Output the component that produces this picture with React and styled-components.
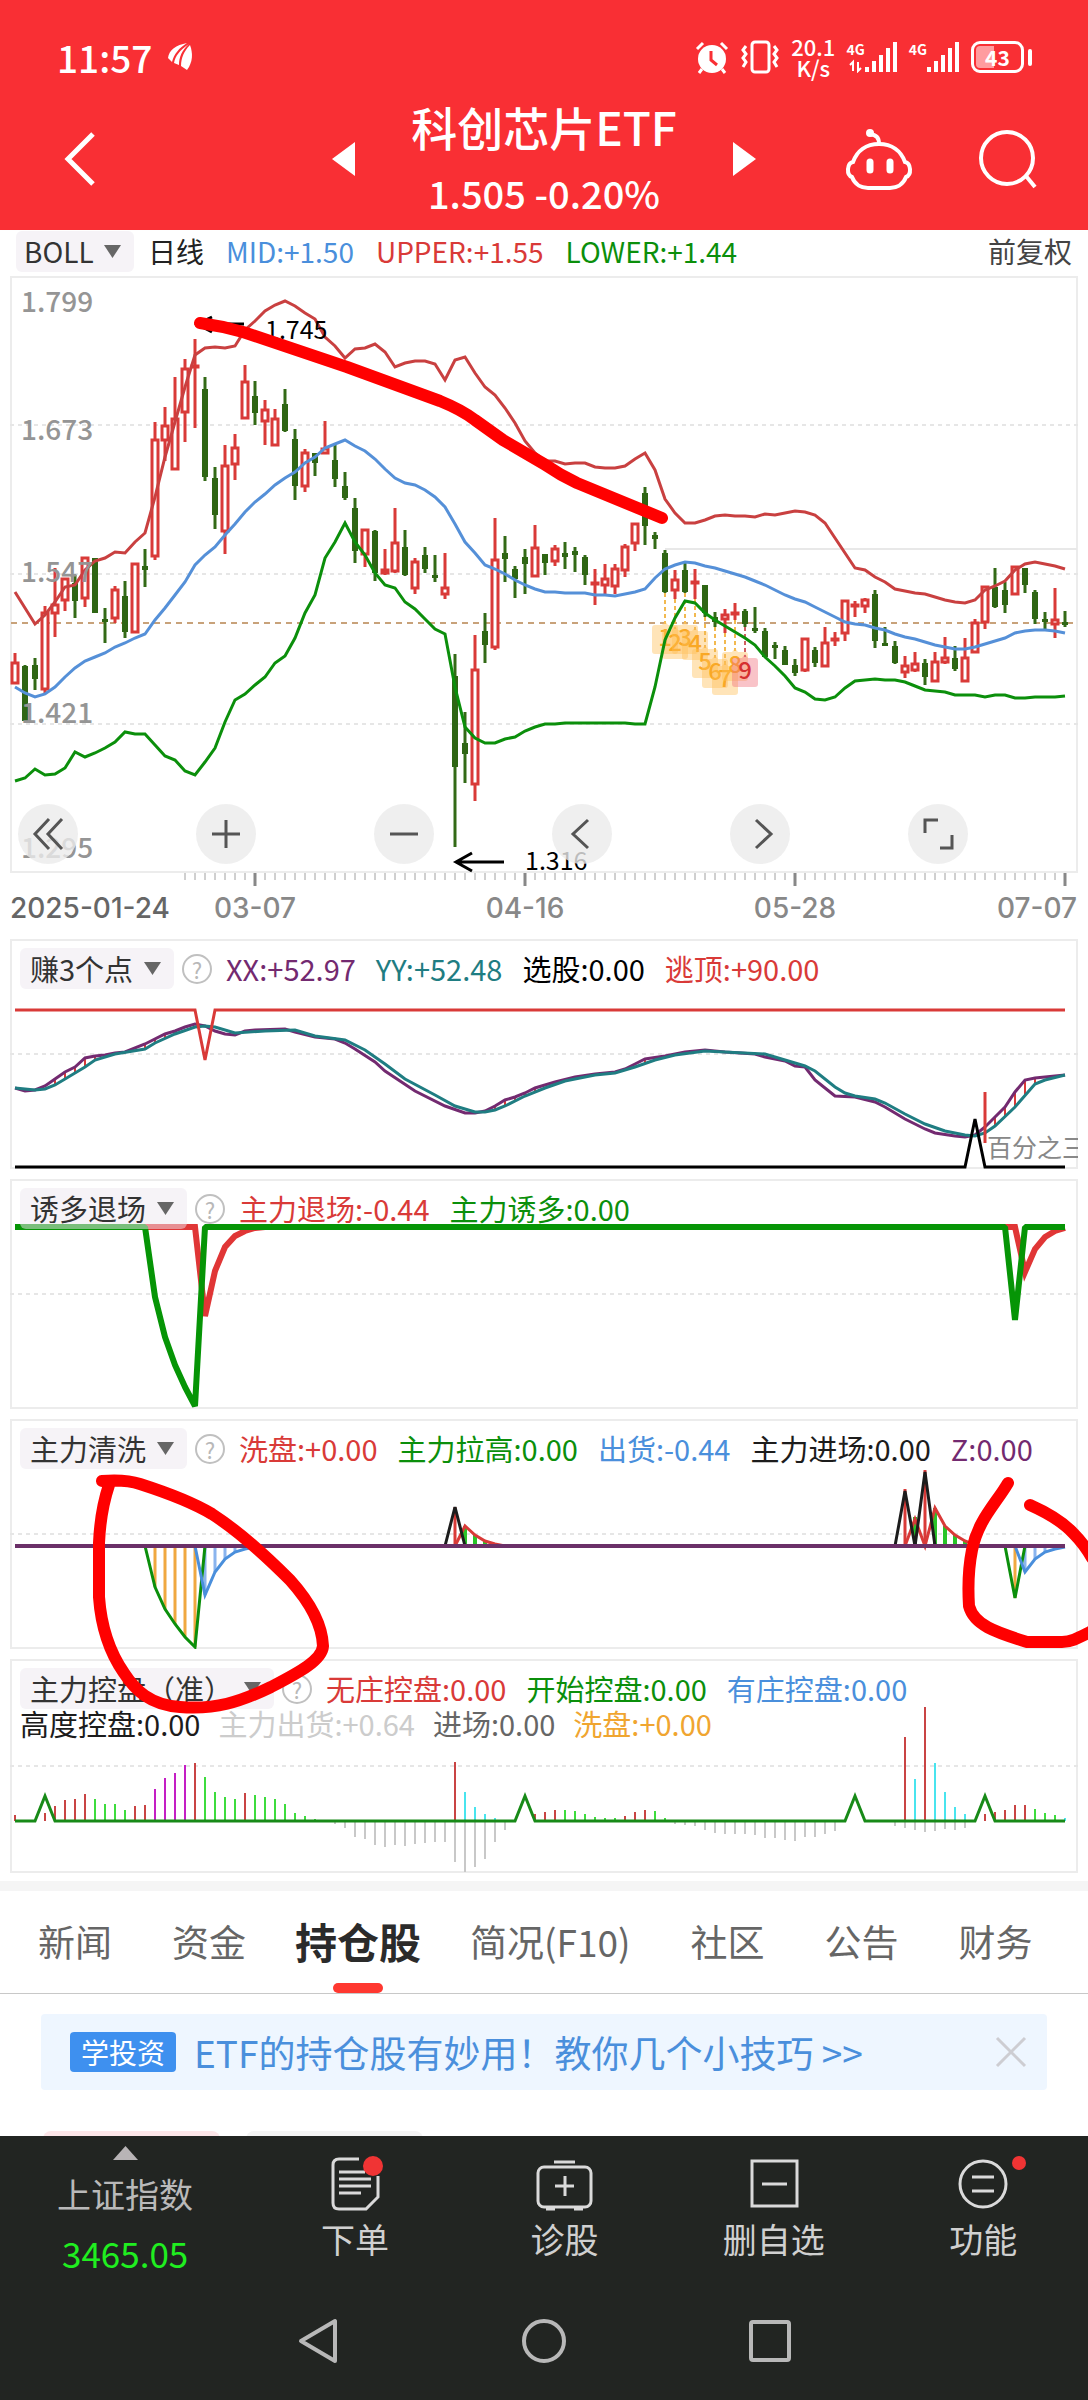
import React from "react";
import styled, { createGlobalStyle } from "styled-components";

const RED = "#d93a38";
const GREEN = "#0b8f0b";
const BLUE = "#4a8fdc";
const PURPLE = "#732a70";
const TEAL = "#1f7d82";
const INK = "#1c1c1c";

const Global = createGlobalStyle`
  *, *::before, *::after { box-sizing: border-box; }
  body { margin: 0; background: #fff; font-family: "Noto Sans CJK SC", "Noto Sans", sans-serif; color: #333; }
  button, select { font: inherit; color: inherit; background: none; border: 0; margin: 0; padding: 0; }
  svg { display: block; }
`;

const Page = styled.div`
  display: flex;
  flex-direction: column;
  overflow: hidden;
`;

/* ---------- header ---------- */

const Header = styled.header`
  background: #f92f34;
  color: #fff;
  height: 230px;
  padding-top: 27px;
`;

const StatusBar = styled.div`
  display: flex;
  align-items: center;
  height: 60px;
  padding: 0 56px 0 57px;
`;

const Clock = styled.span`
  font-size: 37px;
  font-weight: 500;
  line-height: 60px;
  margin-right: 16px;
`;

const StatusIcons = styled.div`
  display: flex;
  align-items: center;
  gap: 11px;
  margin-left: auto;
`;

const NetSpeed = styled.div`
  display: grid;
  grid-auto-rows: 21px;
  font-size: 22px;
  font-weight: 500;
  line-height: 21px;
  text-align: center;
`;

const Signal = styled.div`
  display: flex;
  align-items: flex-start;
  height: 32px;
  font-size: 14px;
  font-weight: 700;
  line-height: 16px;
`;

const Battery = styled.div`
  display: flex;
  align-items: center;
  gap: 4px;
  &::after {
    content: "";
    width: 4px;
    height: 17px;
    border-radius: 2px;
    background: #fff;
  }
`;

const BatteryCell = styled.span`
  width: 53px;
  height: 32px;
  border: 3px solid #fff;
  border-radius: 9px;
  background: linear-gradient(90deg, #ff9c9f 43%, transparent 43%) content-box;
  padding: 2px;
  font-size: 21px;
  font-weight: 700;
  line-height: 22px;
  text-align: center;
`;

const TitleBar = styled.div`
  display: grid;
  grid-template-columns: 1fr auto 1fr;
  align-items: center;
  height: 144px;
  padding: 0 50px;
`;

const IconButton = styled.button`
  display: flex;
  justify-content: center;
  align-items: center;
  cursor: pointer;
`;

const TitleGroup = styled.div`
  display: flex;
  align-items: center;
  gap: 56px;
`;

const TitleText = styled.div`
  text-align: center;
  h1 {
    margin: 0;
    font-size: 46px;
    font-weight: 500;
    line-height: 64px;
  }
  p {
    margin: 4px 0 0;
    font-size: 38px;
    font-weight: 500;
    line-height: 62px;
  }
`;

const Actions = styled.div`
  display: flex;
  justify-content: flex-end;
  gap: 64px;
`;

/* ---------- charts ---------- */

const Charts = styled.main`
  position: relative;
  padding: 0 10px 8px;
`;

const Legend = styled.div`
  display: flex;
  flex-wrap: wrap;
  align-items: center;
  column-gap: ${(p) => p.$gap || 20}px;
  font-size: ${(p) => p.$size || 29}px;
  line-height: 41px;
  white-space: nowrap;
`;

const TopLegend = styled(Legend)`
  height: 46px;
  padding: 0 6px 3px;
  line-height: 43px;
`;

const Value = styled.span`
  color: ${(p) => p.$color};
`;

const EndValue = styled(Value)`
  margin-left: auto;
`;

const SecondRow = styled.div`
  display: flex;
  flex-basis: 100%;
  gap: 18px;
  line-height: 28px;
`;

const Pill = styled.label`
  display: inline-flex;
  align-items: center;
  gap: 10px;
  padding: 0 13px 0 ${(p) => (p.$tight ? 8 : 10)}px;
  border-radius: 6px;
  background: rgba(237, 231, 239, 0.5);
  color: #333;
  margin-right: ${(p) => (p.$tight ? -8 : -12)}px;
  select {
    appearance: none;
    outline: none;
    height: 41px;
    line-height: 41px;
  }
`;

const HelpButton = styled.button`
  width: 30px;
  height: 30px;
  border: 2px solid #c0c0c0;
  border-radius: 50%;
  color: #b8b8b8;
  font-size: 22px;
  line-height: 26px;
  margin-right: -6px;
`;

const Panel = styled.section`
  display: grid;
  margin-bottom: ${(p) => p.$space}px;
  box-shadow: inset 0 0 0 2px #ececec;
  > * { grid-area: 1 / 1; }
`;

const PanelLegend = styled(Legend)`
  align-self: start;
  padding: 9px 0 0 10px;
  z-index: 1;
`;

const Plot = styled.svg`
  width: 100%;
  height: auto;
`;

const Tools = styled.div`
  align-self: end;
  display: grid;
  grid-template-columns: repeat(6, 1fr);
  padding: 0 0 9px 8px;
  margin-right: -8px;
`;

const ToolButton = styled.button`
  width: 60px;
  height: 60px;
  border-radius: 50%;
  background: rgba(235, 235, 235, 0.8);
  display: grid;
  place-items: center;
`;

const Markup = styled.svg`
  position: absolute;
  left: 0;
  top: 0;
  width: 100%;
  height: auto;
  pointer-events: none;
  z-index: 2;
`;

/* ---------- tabs and banner ---------- */

const Tabs = styled.nav`
  display: flex;
  height: 113px;
  padding-left: 8px;
  border-top: 10px solid #f5f5f5;
  border-bottom: 1px solid #c8c8c8;
`;

const Tab = styled.button`
  display: flex;
  flex-direction: column;
  align-items: center;
  padding: 0 ${(p) => (p.$active ? 19 : 30)}px;
  font-size: ${(p) => (p.$active ? 42 : 37)}px;
  font-weight: ${(p) => (p.$active ? 700 : 400)};
  color: ${(p) => (p.$active ? "#2b2b2b" : "#666")};
  line-height: 100px;
  white-space: nowrap;
  height: 102px;
  &::after {
    content: "";
    flex: none;
    width: 50px;
    height: 10px;
    margin-top: -8px;
    border-radius: 5px;
    background: ${(p) => (p.$active ? "#ff3830" : "transparent")};
  }
`;

const Holdings = styled.section`
  padding: 20px 41px 0;
  height: 142px;
  overflow: hidden;
`;

const Banner = styled.div`
  display: flex;
  align-items: center;
  height: 76px;
  padding: 0 20px 0 29px;
  border-radius: 4px;
  background: #eef6ff;
  a {
    margin: 0 auto 0 18px;
    font-size: 37px;
    line-height: 76px;
    color: #4a8fdc;
    text-decoration: none;
    white-space: nowrap;
  }
`;

const Badge = styled.span`
  flex: none;
  width: 106px;
  height: 40px;
  border-radius: 4px;
  background: #3e90ef;
  color: #fff;
  font-size: 28px;
  line-height: 40px;
  text-align: center;
`;

const Chips = styled.div`
  display: flex;
  gap: 26px;
  margin: 41px 0 0 2px;
`;

const Chip = styled.div`
  width: 177px;
  height: 40px;
  border-radius: 8px;
  background: ${(p) => p.$fill};
`;

/* ---------- bottom bars ---------- */

const Bottom = styled.footer`
  background: #222522;
  color: #d0d0d0;
  height: 264px;
`;

const ActionBar = styled.div`
  display: grid;
  grid-template-columns: 23% repeat(4, 1fr);
  height: 146px;
  font-size: 34px;
`;

const ActionButton = styled.button`
  display: flex;
  flex-direction: column;
  align-items: center;
  padding-top: 20px;
  line-height: 46px;
`;

const IndexButton = styled(ActionButton)`
  padding-top: 10px;
  color: #b9b9b9;
  span { line-height: 50px; margin-top: 9px; }
  strong { font-size: 35px; font-weight: 400; line-height: 50px; margin-top: 9px; color: #20ee20; }
`;

const SystemNav = styled.div`
  display: flex;
  justify-content: center;
  align-items: center;
  gap: 182px;
  height: 118px;
`;

/* ---------- data ---------- */

const X0 = 15;
const STEP = 10;
const px = (i) => X0 + i * STEP;

// [direction, high, body top, body bottom, low]
const candles = [
  ["r",653,662,684,684],["g",665,666,721,721],["g",658,665,679,690],["r",606,612,690,693],["r",568,604,614,637],
  ["r",578,578,601,611],["g",575,583,601,618],["r",557,557,599,607],["g",558,558,613,613],["g",608,619,621,643],
  ["r",586,589,619,623],["g",581,596,632,638],["r",563,563,633,633],["g",549,566,570,587],["r",422,439,557,560],
  ["r",407,425,441,461],["r",377,418,470,470],["r",359,368,413,442],["r",339,365,368,428],["g",377,389,477,481],
  ["g",467,478,515,529],["r",445,465,532,554],["r",434,447,465,480],["r",365,381,419,419],["g",381,396,413,425],
  ["r",400,409,422,445],["r",409,418,446,446],["g",389,404,431,432],["g",429,439,486,500],["r",449,452,487,492],
  ["g",453,453,463,476],["r",421,448,454,454],["g",444,460,479,487],["g",472,486,498,500],["g",498,508,551,563],
  ["r",529,529,555,567],["g",530,531,573,581],["r",549,569,574,575],["r",508,542,572,573],["g",530,547,575,576],
  ["r",558,561,589,594],["g",547,555,569,573],["g",555,575,577,582],["r",553,587,595,599],["g",654,676,767,847],
  ["g",712,743,754,783],["r",635,669,785,801],["g",613,631,645,663],["r",518,559,648,650],["g",536,553,559,582],
  ["g",566,569,579,598],["g",549,557,564,594],["r",525,547,577,577],["g",554,554,563,575],["r",545,548,562,566],
  ["g",542,553,557,569],["g",547,551,555,572],["g",555,557,575,585],["r",569,582,585,605],["r",564,578,586,594],
  ["r",564,568,587,594],["r",544,546,571,577],["r",523,523,544,551],["g",487,493,526,545],["g",532,535,539,549],
  ["g",550,553,592,593],["r",570,579,591,599],["g",563,570,592,593],["r",569,581,583,599],["g",585,585,613,617],
  ["g",612,617,622,627],["r",609,614,620,633],["r",603,612,614,620],["g",609,611,624,627],["g",607,628,630,633],
  ["g",628,631,657,657],["g",642,645,647,659],["g",646,650,665,665],["g",659,665,673,676],["r",638,638,671,672],
  ["g",647,650,663,667],["r",627,642,667,667],["r",632,638,641,646],["r",600,600,634,641],["r",601,604,606,617],
  ["r",598,599,607,613],["g",590,594,641,648],["g",627,643,645,645],["g",641,646,663,664],["r",656,665,673,678],
  ["r",652,663,671,672],["g",659,663,677,685],["r",652,661,682,682],["r",637,657,663,664],["g",646,658,669,671],
  ["r",638,657,682,682],["r",619,622,653,653],["r",586,586,623,629],["g",568,587,607,608],["g",582,590,605,613],
  ["r",566,566,595,595],["g",568,568,585,593],["g",590,592,619,624],["g",612,619,620,629],["r",588,619,625,638],
  ["g",611,622,624,627],
];

const upper = [592,608,624,615,602,587,585,570,561,558,552,553,542,533,497,457,422,387,355,348,347,348,346,330,321,311,305,301,306,313,319,337,346,358,349,348,344,352,367,363,361,361,364,380,360,357,373,387,395,408,423,441,453,461,461,464,463,463,467,468,468,466,459,453,470,499,513,523,523,520,516,515,516,516,517,514,515,513,511,512,515,523,538,553,568,570,577,582,589,591,593,594,597,600,602,603,600,590,586,581,570,564,562,564,566,569];
const mid = [687,693,697,694,687,677,668,661,657,653,647,643,638,634,620,608,595,582,565,555,547,535,524,512,502,494,485,478,472,463,457,448,444,440,446,451,459,469,478,483,485,490,497,507,524,542,553,565,569,574,580,585,589,592,592,593,593,593,595,595,596,594,592,589,578,569,565,562,563,566,568,571,574,577,581,585,590,595,599,602,607,612,617,622,624,625,628,630,634,637,639,642,645,647,649,649,647,644,641,638,633,631,630,630,631,633];
const lower = [781,778,769,775,774,768,752,757,753,748,742,732,734,734,745,756,760,771,775,762,748,722,700,694,685,677,663,656,638,613,595,558,542,523,542,555,573,585,588,602,609,619,629,634,687,727,738,743,743,739,737,731,727,724,724,723,723,723,723,723,723,723,724,724,687,640,618,601,603,613,620,626,632,638,645,657,666,676,688,692,699,700,697,688,681,680,679,680,680,682,686,690,691,692,695,695,695,697,695,695,698,698,697,697,697,696];

const series = (ys) => ys.map((y, i) => `${px(i)},${y}`).join(" ");

// [label, x, digit centre y, dash start y]
const counts = [
  [1,665,638,593],[2,675,643,599],[3,685,638,593],[4,695,644,599],[5,705,662,617],
  [6,715,672,627],[7,725,679,633],[8,735,665,620],[9,745,671,627],
];

const xx = [[15,1088],[25,1091],[35,1090],[45,1086],[55,1079],[65,1072],[75,1067],[85,1058],[95,1056],[105,1055],[115,1053],[125,1052],[145,1044],[165,1034],[175,1031],[185,1027],[195,1024],[205,1026],[215,1031],[225,1034],[235,1035],[245,1031],[255,1030],[285,1029],[295,1032],[315,1037],[335,1039],[345,1043],[355,1049],[375,1062],[385,1071],[415,1091],[445,1106],[465,1113],[475,1113],[485,1111],[495,1106],[505,1100],[515,1097],[525,1093],[535,1088],[555,1082],[575,1077],[595,1074],[615,1072],[625,1069],[635,1064],[645,1059],[665,1056],[685,1052],[705,1050],[725,1052],[755,1054],[765,1057],[785,1061],[795,1066],[805,1067],[815,1080],[825,1088],[835,1096],[855,1097],[875,1102],[885,1107],[905,1119],[925,1129],[935,1133],[955,1136],[965,1137],[975,1135],[985,1127],[995,1117],[1005,1107],[1015,1092],[1025,1080],[1035,1078],[1065,1075]];
const yy = [[15,1088],[35,1090],[45,1089],[55,1085],[65,1079],[75,1073],[85,1067],[95,1060],[115,1054],[145,1049],[155,1043],[175,1034],[195,1027],[205,1026],[215,1027],[235,1033],[265,1031],[295,1030],[315,1036],[345,1040],[365,1050],[385,1064],[405,1079],[435,1095],[455,1106],[475,1112],[485,1112],[495,1110],[505,1106],[525,1096],[545,1088],[565,1081],[595,1075],[615,1073],[635,1067],[655,1060],[675,1055],[705,1051],[765,1054],[785,1060],[805,1066],[815,1071],[835,1087],[845,1093],[855,1096],[875,1099],[885,1103],[905,1114],[925,1124],[945,1131],[965,1135],[975,1136],[985,1133],[995,1126],[1015,1107],[1035,1084],[1045,1080],[1065,1075]];
const gaps = [[55,1079,1085],[65,1072,1079],[75,1067,1073],[85,1058,1067],[95,1056,1060],[145,1044,1049],[155,1039,1043],[165,1034,1039],[175,1031,1034],[495,1106,1110],[505,1100,1106],[515,1097,1101],[525,1093,1096],[535,1088,1092],[645,1059,1063],[995,1117,1126],[1005,1107,1116],[1015,1092,1107],[1025,1080,1095],[1035,1078,1084]];

const RB = "#c94444", GB = "#3ddc3d", CY = "#48e4ee", MG = "#c41ec4", GY = "#c8c8c8";
// [colour, [x, end y]...]
const bars = [
  [RB, [15,1815],[45,1813],[55,1806],[65,1800],[75,1799],[85,1794],[135,1806],[145,1805],[195,1763],[245,1793],[455,1762],[535,1814],[545,1812],[555,1810],[625,1816],[635,1812],[645,1810],[905,1737],[925,1707],[985,1814],[995,1812],[1005,1810],[1015,1805],[1025,1805]],
  [GB, [95,1799],[105,1804],[115,1804],[125,1810],[205,1777],[215,1792],[225,1797],[235,1799],[255,1795],[265,1797],[275,1799],[285,1804],[295,1813],[305,1816],[315,1819],[565,1810],[575,1811],[585,1814],[595,1817],[605,1818],[615,1818],[655,1811],[665,1818],[1035,1809],[1045,1813],[1055,1815]],
  [MG, [155,1789],[165,1778],[175,1773],[185,1765]],
  [CY, [465,1792],[475,1807],[485,1814],[495,1818],[915,1779],[935,1763],[945,1792],[955,1807],[965,1814],[1065,1818]],
  [GY, [335,1824],[345,1828],[355,1837],[365,1839],[375,1845],[385,1847],[395,1845],[405,1846],[415,1844],[425,1843],[435,1842],[445,1842],[455,1862],[465,1872],[475,1867],[485,1859],[495,1842],[505,1830],[675,1824],[685,1825],[695,1826],[705,1830],[715,1833],[725,1834],[735,1834],[745,1834],[755,1835],[765,1838],[775,1838],[785,1840],[795,1841],[805,1837],[815,1837],[825,1834],[835,1831],[895,1826],[905,1828],[915,1830],[925,1832],[935,1831],[945,1829],[955,1830],[965,1828]],
];

/* ---------- small parts ---------- */

function Picker({ name, value, tight }) {
  return (
    <Pill $tight={tight}>
      <select aria-label={name} defaultValue={value}>
        <option>{value}</option>
      </select>
      <svg width="17" height="13" viewBox="0 0 17 13"><path d="M0 0h17L8.500 13z" fill="#666" /></svg>
    </Pill>
  );
}

function Grid({ y }) {
  return <path d={`M10 ${y}H1078`} stroke="#e6e6e6" strokeWidth="2" strokeDasharray="4 4" />;
}

function Line({ points, color, width = 3, fill = "none" }) {
  return <polyline points={points.join(" ")} fill={fill} stroke={color} strokeWidth={width} strokeLinejoin="miter" />;
}

function Bars({ items, color, base, width = 2 }) {
  return <path d={items.map(([x, y]) => `M${x} ${base}V${y}`).join("")} stroke={color} strokeWidth={width} />;
}

function IndicatorPanel({ name, values, top, height = 230, space = 10, children, more }) {
  return (
    <Panel $space={space}>
      <Plot viewBox={`10 ${top} 1068 ${height}`} role="img" aria-label={name}>{children}</Plot>
      <PanelLegend>
        <Picker name="指标" value={name} />
        <HelpButton aria-label="指标说明">?</HelpButton>
        {values.map(([text, color]) => <Value key={text} $color={color}>{text}</Value>)}
        {more && <SecondRow>{more.map(([text, color]) => <Value key={text} $color={color}>{text}</Value>)}</SecondRow>}
      </PanelLegend>
    </Panel>
  );
}

function SignalBars({ arrows }) {
  const x = arrows ? 16 : 0;
  return (
    <svg width={33 + x} height="32" viewBox={`${-x} 0 ${33 + x} 32`} style={{ marginLeft: -x }}>
      <path d="M2 31v-5M9 31V20M16 31V14M23 31V7M30 31V1" stroke="#fff" strokeWidth="4" />
      {arrows && <path d="M-12 30v-9l-3 3M-7 21v9l3-3" stroke="#fff" strokeWidth="2" fill="none" />}
    </svg>
  );
}

const tools = [
  ["最左", "M26 10L12 25l14 15M39 10L25 25l14 15"],
  ["放大", "M25 11v28M11 25h28"],
  ["缩小", "M11 25h28"],
  ["左移", "M31 11L16 25l15 14"],
  ["右移", "M21 11l15 14-15 14"],
  ["全屏", "M12 24V11h13M27 39h12V26"],
];

function Candle({ d, i }) {
  const [dir, hi, top, bottom, lo] = d;
  const x = px(i);
  if (dir === "g") {
    return (
      <g>
        <path d={`M${x} ${hi}V${lo}`} stroke="#336a16" strokeWidth="3" />
        <rect x={x - 3} y={top} width="6" height={Math.max(3, bottom - top)} fill="#2f6614" />
      </g>
    );
  }
  return (
    <g stroke={RED} strokeWidth="3" fill="none">
      <path d={`M${x} ${hi}V${top}M${x} ${bottom}V${lo}`} />
      <rect x={x - 3} y={top + 1} width="6" height={Math.max(1, bottom - top - 2)} fill="#fff" />
    </g>
  );
}

function MainChart() {
  return (
    <Plot viewBox="10 276 1068 597" role="img" aria-label="日线">
      <Grid y={425} /><Grid y={574} /><Grid y={724} />
      <path d="M665 549H1077" stroke="#e8e8e8" strokeWidth="2" />
      <path d="M11 623H1074" stroke="#c8a27a" strokeWidth="2" strokeDasharray="6 5" />
      {candles.map((d, i) => <Candle key={i} d={d} i={i} />)}
      <g fill="none" strokeWidth="3">
        <polyline points={series(upper)} stroke="#c94040" />
        <polyline points={series(mid)} stroke="#5590d8" />
      </g>
      {counts.map(([n, x, y, from]) => {
        const hot = n === 9;
        return (
          <g key={n}>
            <path d={`M${x} ${from}V${y - 14}`} stroke={hot ? "#d06060" : "#f2b950"} strokeWidth="2" strokeDasharray="4 3" />
            <path d={`M${x - 10} ${y - 13}h7l3-4 3 4h7q3 0 3 3v23q0 3-3 3h-20q-3 0-3-3v-23q0-3 3-3z`} fill={hot ? "#f0707c" : "#ffbf55"} opacity="0.420" />
            <text x={x} y={y + 8} textAnchor="middle" fontSize="24" fontWeight="500" fill={hot ? "#d63030" : "#f9a825"}>{n}</text>
          </g>
        );
      })}
      <polyline points={series(lower)} stroke={GREEN} fill="none" strokeWidth="3" />
      <g fontSize="28" fill="#959595" fontWeight="500">
        <text x="21" y="312">1.799</text>
        <text x="21" y="440">1.673</text>
        <text x="21" y="582">1.547</text>
        <text x="21" y="723">1.421</text>
        <text x="21" y="858">1.295</text>
      </g>
      <g fontSize="25" fill="#000">
        <text x="265" y="339">1.745</text>
        <text x="525" y="870">1.316</text>
      </g>
      <path d="M199 324H244M212 317L197 324l15 8M456 862H504M472 853L456 862l16 9" stroke="#000" strokeWidth="3" fill="none" />
    </Plot>
  );
}

function TimeAxis() {
  const ticks = [];
  for (let x = 185; x <= 1065; x += 10) ticks.push(x);
  return (
    <Plot viewBox="10 873 1068 66" role="img" aria-label="日期">
      <path d={ticks.map((x) => `M${x} 873V880`).join("")} stroke="#a0a0a0" strokeWidth="1" />
      <path d="M255 873V886M525 873V886M795 873V886M1065 873V886" stroke="#888" strokeWidth="3" />
      <g fontFamily="Inter, sans-serif" fontSize="28" fill="#888" fontWeight="500">
        <text x="10" y="918" fill="#666">2025-01-24</text>
        <text x="255" y="918" textAnchor="middle">03-07</text>
        <text x="525" y="918" textAnchor="middle">04-16</text>
        <text x="795" y="918" textAnchor="middle">05-28</text>
        <text x="1077" y="918" textAnchor="end">07-07</text>
      </g>
    </Plot>
  );
}

const tabs = ["新闻", "资金", "持仓股", "简况(F10)", "社区", "公告", "财务"];

const dockIcons = {
  下单: (
    <>
      <path d="M30 3H10Q4 3 4 9v38q0 6 6 6h27l12-12V20" />
      <path d="M10 16h26M10 23h32M10 30h32M10 37h22" />
      <circle cx="44" cy="10" r="10" fill="#f03434" stroke="none" />
    </>
  ),
  诊股: (
    <>
      <rect x="0" y="11" width="53" height="40" rx="6" />
      <path d="M16 6h21M27 20v20M17 30h19M8 53h9M36 53h9" />
    </>
  ),
  删自选: (
    <>
      <rect x="4" y="5" width="45" height="45" />
      <path d="M14 28h25" />
    </>
  ),
  功能: (
    <>
      <circle cx="26" cy="28" r="23" />
      <path d="M15 21h22M15 35h22" />
      <circle cx="62" cy="7" r="7" fill="#f03434" stroke="none" />
    </>
  ),
};

export default function App() {
  return (
    <Page>
      <Global />
      <Header>
        <StatusBar>
          <Clock>11:57</Clock>
          <svg width="25" height="28" viewBox="0 0 25 28" fill="#fff">
            <path d="M19 0C8 2 1 7 0 15l4 4C6 11 11 5 19 0z" />
            <path d="M21 1C12 7 7 13 6 20l5 2C11 14 14 7 21 1z" />
            <path d="M22 2c-6 6-9 13-9 21l6 4c6-8 6-17 3-25z" />
          </svg>
          <StatusIcons>
            <svg width="34" height="33" viewBox="0 0 34 33">
              <circle cx="17" cy="18" r="14" fill="#fff" />
              <path d="M2 8l6-6M32 8l-6-6M7 28l-3 4M27 28l3 4" stroke="#fff" strokeWidth="3" />
              <path d="M16 10v9l6 5" stroke="#f92f34" strokeWidth="3" fill="none" />
            </svg>
            <svg width="40" height="34" viewBox="0 0 40 34" stroke="#fff" strokeWidth="3" fill="none">
              <rect x="12" y="2" width="17" height="30" rx="3" />
              <path d="M6 6l-3 4 3 4-3 4 3 4-3 5M34 6l3 4-3 4 3 4-3 4 3 5" />
            </svg>
            <NetSpeed><span>20.1</span><span>K/s</span></NetSpeed>
            <Signal>4G<SignalBars arrows /></Signal>
            <Signal>4G<SignalBars /></Signal>
            <Battery><BatteryCell>43</BatteryCell></Battery>
          </StatusIcons>
        </StatusBar>
        <TitleBar>
          <div>
            <IconButton aria-label="返回">
              <svg width="52" height="56" viewBox="-8 0 52 56"><path d="M35 3L10 28l25 25" fill="none" stroke="#fff" strokeWidth="5" /></svg>
            </IconButton>
          </div>
          <TitleGroup>
            <IconButton aria-label="上一个"><svg width="23" height="34" viewBox="0 0 23 34"><path d="M23 0v34L0 17z" fill="#fff" /></svg></IconButton>
            <TitleText>
              <h1>科创芯片ETF</h1>
              <p>1.505 -0.20%</p>
            </TitleText>
            <IconButton aria-label="下一个"><svg width="23" height="34" viewBox="0 0 23 34"><path d="M0 0v34l23-17z" fill="#fff" /></svg></IconButton>
          </TitleGroup>
          <Actions>
            <IconButton aria-label="助手">
              <svg width="70" height="64" viewBox="0 0 70 64" fill="none" stroke="#fff" strokeWidth="4">
                <path d="M35 17C22 17 13 24 9 35C3 36 2 48 8 50C11 58 18 61 24 61H46C52 61 59 58 62 50C68 48 67 36 61 35C57 24 48 17 35 17Z" />
                <path d="M35 17C35 10 32 8 26 7" />
                <circle cx="26" cy="6" r="2" fill="#fff" />
                <path d="M26 35v8M46 35v8" strokeWidth="7" strokeLinecap="round" />
              </svg>
            </IconButton>
            <IconButton aria-label="搜索">
              <svg width="60" height="60" viewBox="0 0 60 60" fill="none" stroke="#fff" strokeWidth="4"><circle cx="29" cy="29" r="26" /><path d="M48 47l9 11" /></svg>
            </IconButton>
          </Actions>
        </TitleBar>
      </Header>

      <Charts>
        <TopLegend $gap={22} $size={28}>
          <Picker name="主图指标" value="BOLL" tight />
          <Value $color="#222">日线</Value>
          <Value $color={BLUE}>MID:+1.50</Value>
          <Value $color={RED}>UPPER:+1.55</Value>
          <Value $color={GREEN}>LOWER:+1.44</Value>
          <EndValue $color="#444">前复权</EndValue>
        </TopLegend>
        <Panel $space={0}>
          <MainChart />
          <Tools>
            {tools.map(([name, d]) => (
              <ToolButton key={name} aria-label={name}>
                <svg width="50" height="50" viewBox="0 0 50 50"><path d={d} fill="none" stroke="#555" strokeWidth="3" /></svg>
              </ToolButton>
            ))}
          </Tools>
        </Panel>
        <TimeAxis />

        <IndicatorPanel name="赚3个点" top={939} values={[["XX:+52.97", PURPLE], ["YY:+52.48", TEAL], ["选股:0.00", "#000"], ["逃顶:+90.00", RED]]}>
          <Grid y={1054} />
          {gaps.map(([x, a, b]) => <path key={x} d={`M${x} ${a}V${b}`} stroke={RED} strokeWidth="2" />)}
          <Line points={xx} color={PURPLE} />
          <Line points={yy} color={TEAL} />
          <Line points={[[15,1010],[195,1010],[205,1060],[215,1010],[1065,1010]]} color={RED} />
          <path d="M985 1092V1143" stroke={RED} strokeWidth="3" />
          <Line points={[[15,1167],[965,1167],[975,1119],[985,1167],[1065,1167]]} color="#000" width={3} />
          <text x="987" y="1157" fontSize="25" fill="#888">百分之三</text>
        </IndicatorPanel>

        <IndicatorPanel name="诱多退场" top={1179} values={[["主力退场:-0.44", RED], ["主力诱多:0.00", GREEN]]}>
          <Grid y={1294} />
          <Line points={[[15,1227],[195,1227],[205,1316],[215,1271],[225,1247],[235,1236],[245,1231],[255,1228],[265,1227],[1015,1227],[1025,1272],[1035,1249],[1045,1237],[1055,1231],[1065,1228]]} color="#e03636" width={6} />
          <polyline points="15,1227 145,1227 155,1297 165,1337 175,1365 185,1387 195,1406 205,1227 1005,1227 1015,1320 1025,1227 1065,1227" fill="none" stroke="#069506" strokeWidth="6" strokeLinejoin="bevel" />
        </IndicatorPanel>

        <IndicatorPanel name="主力清洗" top={1419} values={[["洗盘:+0.00", RED], ["主力拉高:0.00", GREEN], ["出货:-0.44", BLUE], ["主力进场:0.00", INK], ["Z:0.00", PURPLE]]}>
          <Grid y={1534} />
          <Bars base={1546} color="#f0a840" items={[[155,1587],[165,1609],[175,1624],[185,1637],[195,1647],[1015,1598]]} width={3} />
          <Bars base={1546} color="#8ab4ee" items={[[205,1595],[215,1572],[225,1559],[235,1552],[1025,1572],[1035,1559],[1045,1552]]} width={3} />
          <Bars base={1546} color="#28c428" width={4} items={[[465,1526],[475,1535],[485,1541],[915,1517],[935,1508],[945,1526],[955,1535],[965,1541]]} />
          <Bars base={1546} color={RED} items={[[455,1507],[905,1489],[925,1470]]} width={3} />
          <Line points={[[145,1546],[155,1587],[165,1609],[175,1624],[185,1637],[195,1647],[205,1546]]} color={GREEN} />
          <Line points={[[1005,1546],[1015,1598],[1025,1546]]} color={GREEN} />
          <Line points={[[195,1546],[205,1595],[215,1572],[225,1559],[235,1552],[245,1549],[255,1547],[265,1546]]} color={BLUE} />
          <Line points={[[1015,1546],[1025,1572],[1035,1559],[1045,1552],[1055,1549],[1065,1547]]} color={BLUE} />
          <Line points={[[455,1546],[465,1526],[475,1535],[485,1541],[495,1544],[505,1546]]} color={RED} />
          <Line points={[[905,1546],[915,1519],[925,1546],[935,1508],[945,1526],[955,1535],[965,1541],[975,1545],[985,1546]]} color={RED} />
          <Line points={[[445,1546],[455,1507],[465,1546]]} color={INK} />
          <Line points={[[895,1546],[905,1491],[915,1546],[925,1472],[935,1546]]} color={INK} />
          <path d="M15 1546H1065" stroke="#6b3068" strokeWidth="4" />
        </IndicatorPanel>

        <IndicatorPanel
          name="主力控盘（准）"
          top={1659}
          height={214}
          space={0}
          values={[["无庄控盘:0.00", RED], ["开始控盘:0.00", GREEN], ["有庄控盘:0.00", BLUE]]}
          more={[["高度控盘:0.00", INK], ["主力出货:+0.64", "#ccc"], ["进场:0.00", "#666"], ["洗盘:+0.00", "#f0a530"]]}
        >
          <Grid y={1766} />
          {bars.map(([color, ...items]) => <Bars key={color} base={1821} color={color} items={items} />)}
          <Line points={[[15,1821],[35,1821],[45,1796],[55,1821],[515,1821],[525,1796],[535,1821],[845,1821],[855,1796],[865,1821],[975,1821],[985,1796],[995,1821],[1065,1821]]} color="#188a18" width={3} />
        </IndicatorPanel>

        <Markup viewBox="0 230 1088 1651" fill="none" stroke="#ff0000" strokeWidth="12" strokeLinecap="round" strokeLinejoin="round">
          <path d="M200 323Q222 326 243 332L347 367L440 401Q462 410 475 420L503 440L544 464Q560 475 577 483L662 518" />
          <path d="M102 1481C115 1480 128 1480 140 1484C168 1493 192 1502 212 1514C240 1532 268 1558 290 1580C308 1600 322 1622 323 1646C322 1660 300 1672 271 1687C240 1702 215 1710 180 1707C150 1705 135 1690 124 1673C108 1650 101 1625 99 1597V1543C100 1520 104 1500 109 1485" />
          <path d="M1008 1483C995 1505 978 1520 972 1550C968 1570 968 1590 969 1606C974 1625 995 1632 1027 1642H1062C1072 1642 1080 1637 1092 1631" />
          <path d="M1030 1505C1048 1513 1065 1524 1074 1534Q1084 1544 1092 1558" />
        </Markup>
      </Charts>

      <Tabs>
        {tabs.map((t) => <Tab key={t} $active={t === "持仓股"}>{t}</Tab>)}
      </Tabs>

      <Holdings>
        <Banner>
          <Badge>学投资</Badge>
          <a href="#tips">ETF的持仓股有妙用！教你几个小技巧 &gt;&gt;</a>
          <IconButton aria-label="关闭">
            <svg width="32" height="32" viewBox="0 0 32 32"><path d="M2 2l28 28M30 2L2 30" stroke="#cdcdd2" strokeWidth="3" /></svg>
          </IconButton>
        </Banner>
        <Chips>
          <Chip $fill="#fde6e9" />
          <Chip $fill="#f4f4f4" />
        </Chips>
      </Holdings>

      <Bottom>
        <ActionBar>
          <IndexButton>
            <svg width="25" height="14" viewBox="0 0 25 14"><path d="M0 14L12.500 0 25 14z" fill="#b8b4b6" /></svg>
            <span>上证指数</span>
            <strong>3465.05</strong>
          </IndexButton>
          {Object.entries(dockIcons).map(([name, icon]) => (
            <ActionButton key={name}>
              <svg width="54" height="60" viewBox="-1 0 54 60" fill="none" stroke="#dadada" strokeWidth="3" overflow="visible">{icon}</svg>
              {name}
            </ActionButton>
          ))}
        </ActionBar>
        <SystemNav>
          <IconButton aria-label="后退">
            <svg width="42" height="48" viewBox="0 0 42 48"><path d="M38 4v40L4 24z" fill="none" stroke="#b8b8b8" strokeWidth="4" strokeLinejoin="round" /></svg>
          </IconButton>
          <IconButton aria-label="主页">
            <svg width="46" height="46" viewBox="0 0 46 46"><circle cx="23" cy="23" r="20" fill="none" stroke="#b8b8b8" strokeWidth="4" /></svg>
          </IconButton>
          <IconButton aria-label="最近任务">
            <svg width="42" height="42" viewBox="0 0 42 42"><rect x="2" y="2" width="38" height="38" rx="2" fill="none" stroke="#b8b8b8" strokeWidth="4" /></svg>
          </IconButton>
        </SystemNav>
      </Bottom>
    </Page>
  );
}
